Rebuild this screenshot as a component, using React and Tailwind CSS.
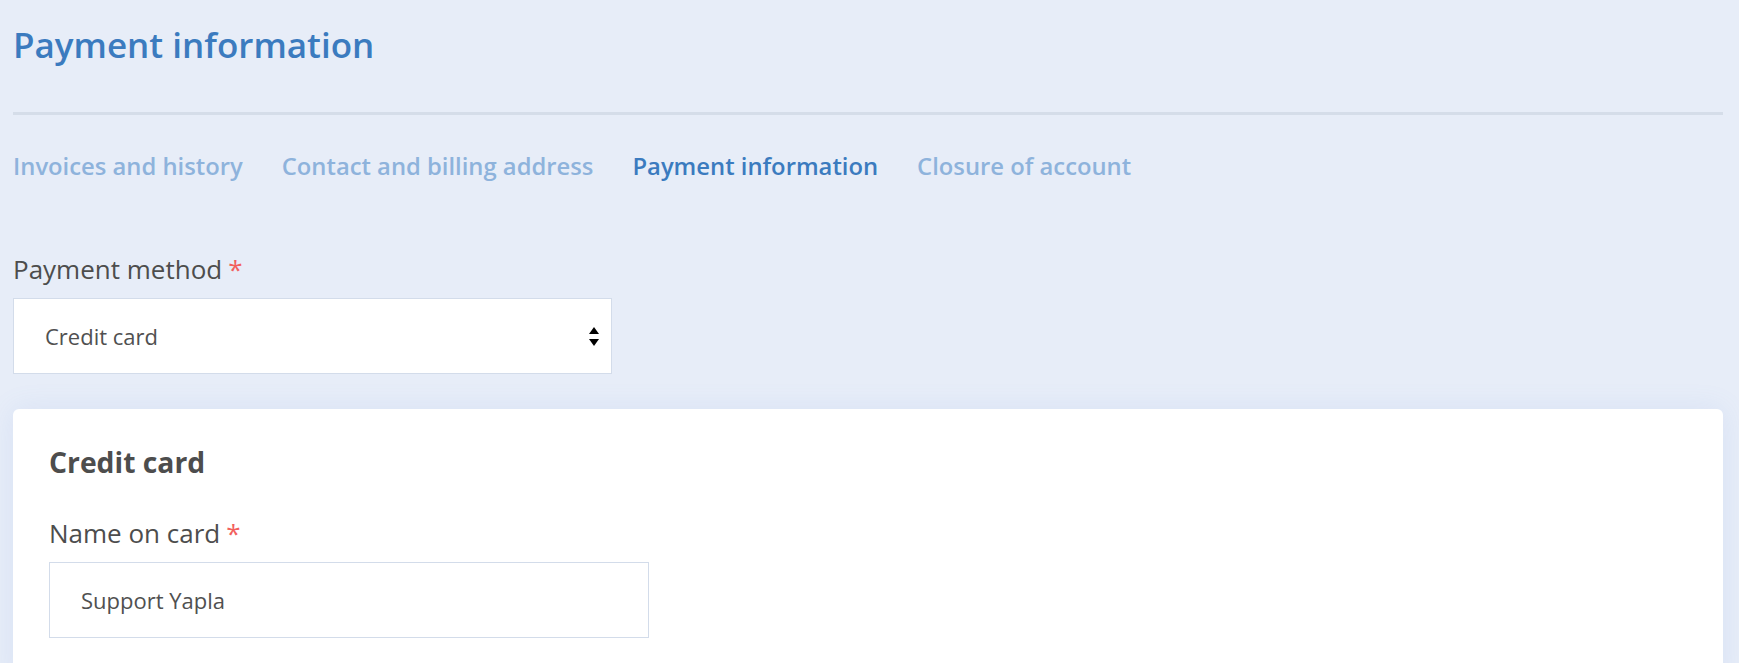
import React from "react";

const tabs = [
  { id: "invoices", name: "Invoices and history" },
  { id: "contact", name: "Contact and billing address" },
  { id: "payment", name: "Payment information" },
  { id: "closure", name: "Closure of account" },
];

function Label({ children }) {
  return (
    <label className="flex items-baseline gap-[6px] text-[26px] leading-[32px] text-[#4d4d4d]">
      <span>{children}</span>
      <span className="text-[#f2605d]">*</span>
    </label>
  );
}

function SelectArrows() {
  return (
    <svg width="10" height="19" viewBox="0 0 10 19" className="text-black">
      <path d="M5 0 L10 7 L0 7 Z" fill="currentColor" />
      <path d="M0 12 L10 12 L5 19 Z" fill="currentColor" />
    </svg>
  );
}

export default function App() {
  const activeTab = "payment";

  return (
    <div
      className="min-h-screen bg-[#e7edf8] pl-[13px] pr-[16px] pt-[27px] overflow-hidden"
      style={{ fontFamily: '"Open Sans", "Noto Sans", sans-serif' }}
    >
      <h1 className="text-[35px] leading-[35px] font-semibold text-[#3b7bbf]">
        Payment information
      </h1>

      <div className="mt-[50px] h-[3px] bg-[#d5dde9]" />

      {/* Tabs */}
      <nav className="mt-[35px] flex gap-[39px]">
        {tabs.map((tab) => (
          <button
            key={tab.id}
            className={`text-[23.8px] leading-[32px] font-semibold ${
              activeTab === tab.id ? "text-[#3b7bbf]" : "text-[#8eb3dc]"
            }`}
          >
            {tab.name}
          </button>
        ))}
      </nav>

      {/* Payment method */}
      <div className="mt-[71px]">
        <Label>Payment method</Label>
        <div className="mt-[13px] w-[599px] h-[76px] bg-white border border-[#d3dcea] flex items-center justify-between pl-[31px] pr-[12px]">
          <span className="text-[22px] text-[#505050]">Credit card</span>
          <SelectArrows />
        </div>
      </div>

      {/* Credit card panel */}
      <div className="mt-[35px] bg-white rounded-[6px] px-[36px] pt-[35px] pb-[48px] shadow-[0_0_28px_rgba(110,145,220,0.12)]">
        <h2 className="text-[28.3px] leading-[36px] font-bold text-[#4d4d4d]">
          Credit card
        </h2>
        <div className="mt-[37px]">
          <Label>Name on card</Label>
          <div className="mt-[13px] w-[600px] h-[76px] bg-white border border-[#d3dcea] flex items-center pl-[31px]">
            <span className="text-[22px] text-[#505050]">Support Yapla</span>
          </div>
        </div>
      </div>
    </div>
  );
}
